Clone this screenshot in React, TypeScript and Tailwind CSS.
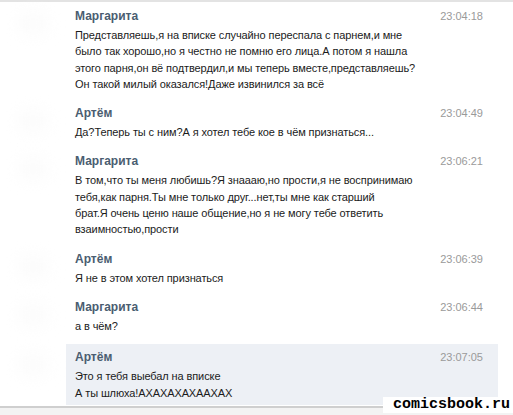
import React from 'react';

type Msg = { name: string; time: string; lines: string[]; active?: boolean };

const messages: Msg[] = [
  {
    name: 'Маргарита',
    time: '23:04:18',
    lines: [
      'Представляешь,я на вписке случайно переспала с парнем,и мне',
      'было так хорошо,но я честно не помню его лица.А потом я нашла',
      'этого парня,он вё подтвердил,и мы теперь вместе,представляешь?',
      'Он такой милый оказался!Даже извинился за всё',
    ],
  },
  {
    name: 'Артём',
    time: '23:04:49',
    lines: ['Да?Теперь ты с ним?А я хотел тебе кое в чём признаться...'],
  },
  {
    name: 'Маргарита',
    time: '23:06:21',
    lines: [
      'В том,что ты меня любишь?Я знаааю,но прости,я не воспринимаю',
      'тебя,как парня.Ты мне только друг...нет,ты мне как старший',
      'брат.Я очень ценю наше общение,но я не могу тебе ответить',
      'взаимностью,прости',
    ],
  },
  { name: 'Артём', time: '23:06:39', lines: ['Я не в этом хотел признаться'] },
  { name: 'Маргарита', time: '23:06:44', lines: ['а в чём?'] },
  {
    name: 'Артём',
    time: '23:07:05',
    lines: ['Это я тебя выебал на вписке', 'А ты шлюха!АХАХАХАХААХАХ'],
    active: true,
  },
];

const App: React.FC = () => {
  return (
    <div
      className="relative w-[513px] h-[415px] overflow-hidden bg-white"
      style={{ fontFamily: '"Liberation Sans", Arial, sans-serif' }}
    >
      {/* top edge */}
      <div className="h-[3px] border-t-2 border-[#e3e3e3]" />

      <div className="flex flex-col">
        {messages.map((m, i) => (
          <div key={i} className={`flex ${m.active ? 'mt-[2px]' : ''}`}>
            {/* blurred avatar */}
            <div className="w-[66px] flex-shrink-0 flex justify-center pt-[10px]">
              <div className="w-[30px] h-[22px] rounded-full bg-[#fbfbfb] blur-sm" />
            </div>
            <div
              className={`w-[432px] flex pl-[9px] pr-[15px] pt-[5px] ${
                m.active ? 'bg-[#edf0f5] pb-[4px]' : 'pb-[8px]'
              }`}
            >
              <div className="flex-1 min-w-0">
                <div className="text-[12px] leading-[16px] font-bold text-[#4a5d71]">{m.name}</div>
                <div className="mt-[3px] text-[11px] leading-[16.3px] tracking-[-0.1px] text-[#1b1b1b] whitespace-nowrap">
                  {m.lines.map((l, j) => (
                    <div key={j}>{l}</div>
                  ))}
                </div>
              </div>
              <div className="flex-shrink-0 text-[11px] leading-[16px] text-[#9a9a9a]">{m.time}</div>
            </div>
          </div>
        ))}
      </div>

      {/* bottom edge */}
      <div className="mt-[1px] h-[12px] border-t-2 border-[#cfcfcf] bg-[#f3f3f3]" />

      {/* watermark */}
      <div
        className="absolute right-0 bottom-[2px] bg-white pl-[10px] pr-[3px] text-[15px] leading-[16px] font-bold text-black"
        style={{ fontFamily: '"Liberation Mono", "Courier New", monospace' }}
      >
        comicsbook.ru
      </div>
    </div>
  );
};

export default App;
